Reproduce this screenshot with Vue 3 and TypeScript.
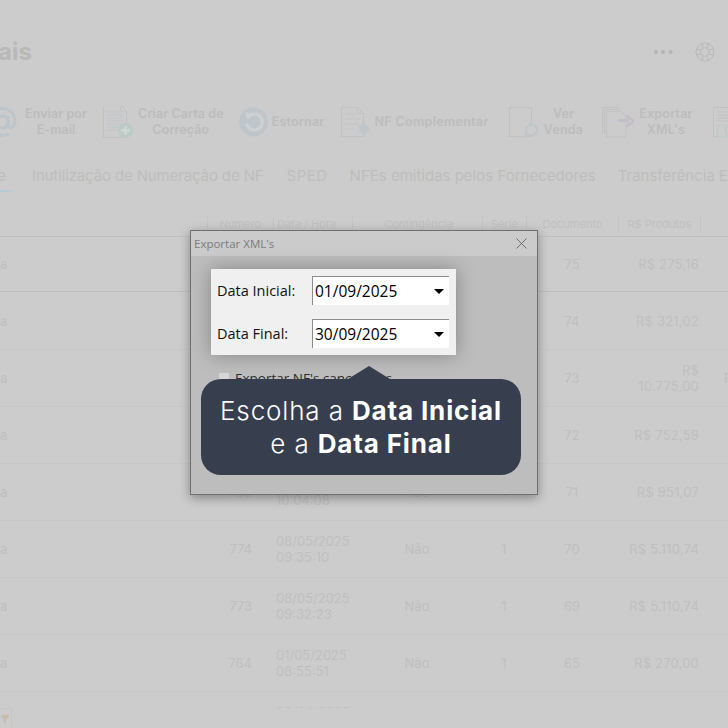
<script setup lang="ts">
interface Row {
  left: string
  num: string
  date: string
  time: string
  cont: string
  serie: string
  doc: string
  value: string
  extra: string
}
const rows: Row[] = [
  { left: 'a', num: '781', date: '02/06/2025', time: '11:12:40', cont: 'Não', serie: '1', doc: '75', value: 'R$ 275,16', extra: '' },
  { left: 'a', num: '780', date: '28/05/2025', time: '15:20:11', cont: 'Não', serie: '1', doc: '74', value: 'R$ 321,02', extra: '' },
  { left: 'a', num: '779', date: '22/05/2025', time: '09:41:52', cont: 'Não', serie: '1', doc: '73', value: 'R$ 10.775,00', extra: 'F' },
  { left: 'a', num: '778', date: '15/05/2025', time: '14:03:27', cont: 'Não', serie: '1', doc: '72', value: 'R$ 752,59', extra: '' },
  { left: 'a', num: '766', date: '09/05/2025', time: '10:04:08', cont: 'Não', serie: '1', doc: '71', value: 'R$ 951,07', extra: '' },
  { left: 'a', num: '774', date: '08/05/2025', time: '09:35:10', cont: 'Não', serie: '1', doc: '70', value: 'R$ 5.110,74', extra: '' },
  { left: 'a', num: '773', date: '08/05/2025', time: '09:32:23', cont: 'Não', serie: '1', doc: '69', value: 'R$ 5.110,74', extra: '' },
  { left: 'a', num: '764', date: '01/05/2025', time: '08:55:51', cont: 'Não', serie: '1', doc: '65', value: 'R$ 270,00', extra: '' },
  { left: 'a', num: '760', date: '30/04/2025', time: '16:21:09', cont: 'Não', serie: '1', doc: '64', value: 'R$ 180,00', extra: '' },
]
const headers = ['', 'Número', 'Data / Hora', 'Contingência', 'Série', 'Documento', 'R$ Produtos', '']
const tabs = ['Nota Fiscal Eletrônica de Saída e', 'Inutilização de Numeração de NF', 'SPED', 'NFEs emitidas pelos Fornecedores', 'Transferência Entre Lojas']
const dates = [
  { label: 'Data Inicial:', value: '01/09/2025' },
  { label: 'Data Final:', value: '30/09/2025' },
]
</script>

<template>
  <div class="page">
    <header class="top">
      <div class="title"><span>Notas Fiscais</span></div>
      <div class="top-actions">
        <svg class="dots" width="20" height="6" viewBox="0 0 20 6">
          <circle cx="3" cy="3" r="2" />
          <circle cx="10" cy="3" r="2" />
          <circle cx="17.5" cy="3" r="2" />
        </svg>
        <svg class="buoy" width="20" height="20" viewBox="0 0 20 20">
          <circle cx="10" cy="10" r="9" />
          <circle cx="10" cy="10" r="4.2" />
          <path d="M7 1.6 8 6M13 1.6 12 6M7 18.4 8 14M13 18.4 12 14M1.6 7 6 8M1.6 13 6 12M18.4 7 14 8M18.4 13 14 12" />
        </svg>
      </div>
    </header>

    <nav class="toolbar">
      <div class="tool t-mail">
        <svg width="30" height="30" viewBox="0 0 30 30">
          <circle cx="15" cy="15" r="6" fill="none" stroke="#bec5ca" stroke-width="3" />
          <path d="M21 9v8.5c0 4.5 7 4 7-3C28 6.500 22 1.500 15 1.500S1.500 7.500 1.500 15 7.500 28.500 15 28.500c3 0 5-.6 7-1.800" fill="none" stroke="#bec5ca" stroke-width="3" />
        </svg>
        <span class="label">Enviar por<br />E-mail</span>
      </div>
      <div class="tool t-carta">
        <svg width="30" height="32" viewBox="0 0 30 32">
          <path d="M.5.500h17l6 6v27H.5z" transform="translate(0 -2)" fill="none" stroke="#c1c1c1" />
          <path d="M17.500 0v5h6" fill="none" stroke="#c1c1c1" />
          <path d="M4 6h12M4 9h16M4 12h16M4 15h16M4 18h16M4 21h14M4 24h12" stroke="#c1c4c9" stroke-width="1.200" />
          <circle cx="22.500" cy="24.500" r="7.500" fill="#bacac4" />
          <path d="M22.500 20v9M18 24.500h9" stroke="#d2d6d3" stroke-width="2.400" />
        </svg>
        <span class="label">Criar Carta de<br />Correção</span>
      </div>
      <div class="tool t-estornar">
        <svg width="29" height="30" viewBox="0 0 29 30">
          <circle cx="14.500" cy="15" r="14.500" fill="#bec6cc" />
          <path d="M9.500 9.500a8 8 0 1 1-2 7" fill="none" stroke="#cfd2d4" stroke-width="3" />
          <path d="M6.500 5.500 13 7 8.500 13z" fill="#cfd2d4" />
          <circle cx="14.500" cy="15" r="3.500" fill="#bfc6cc" />
        </svg>
        <span class="label">Estornar</span>
      </div>
      <div class="tool t-nf">
        <svg width="32" height="32" viewBox="0 0 32 32">
          <path d="M.5 1.500h16l6 6v23H.5z" fill="none" stroke="#c1c1c1" />
          <path d="M16.500 1.500v6h6" fill="none" stroke="#c1c1c1" />
          <path d="M4 8h10M4 13h15M4 18h13M4 23h9" stroke="#c1c1c1" stroke-width="1.200" />
          <path d="M22 16l8 8-5 3-2 3-3-5-4 3 3-5-3-3 4-1z" fill="#bec6cc" />
        </svg>
        <span class="label">NF Complementar</span>
      </div>
      <div class="tool t-venda">
        <svg width="30" height="31" viewBox="0 0 30 31">
          <rect x=".5" y=".5" width="22" height="29" fill="none" stroke="#c1c1c1" />
          <circle cx="22.500" cy="23" r="5.500" fill="#cccccc" stroke="#bec5ca" stroke-width="2" />
          <path d="M18 27.500 14.500 31" stroke="#bec5ca" stroke-width="2.500" />
        </svg>
        <span class="label">Ver<br />Venda</span>
      </div>
      <div class="tool t-xml">
        <svg width="32" height="31" viewBox="0 0 32 31">
          <path d="M.5 26V.5H17M2.500 27V2.500H19" fill="none" stroke="#c1c1c1" />
          <path d="M4.500 30V4.500H19l5 5V30z" fill="#cccccc" stroke="#c1c1c1" />
          <path d="M16 13.500h11" stroke="#c3bcc9" stroke-width="3" />
          <path d="M24 8.500 32 14l-8 5.500" fill="none" stroke="#c3bcc9" stroke-width="2.500" />
        </svg>
        <span class="label">Exportar<br />XML's</span>
      </div>
      <div class="tool t-last">
        <svg width="30" height="31" viewBox="0 0 30 31">
          <rect x=".5" y=".5" width="24" height="29" fill="none" stroke="#c1c1c1" />
          <path d="M4 5h18M4 8h18M4 11h18M4 14h18" stroke="#c1c1c1" />
          <rect x="5" y="18" width="25" height="12" fill="#cccccc" stroke="#bbc7c1" />
          <circle cx="16" cy="24" r="4" fill="none" stroke="#bbc7c1" />
        </svg>
      </div>
    </nav>

    <div class="tabs">
      <div v-for="(tab, i) in tabs" :key="tab" class="tab" :class="{ active: i === 0 }"><span>{{ tab }}</span></div>
    </div>

    <div class="thead">
      <div v-for="(h, i) in headers" :key="i" class="th">{{ h }}</div>
    </div>

    <div class="tbody">
      <div v-for="r in rows" :key="r.doc + r.num" class="tr">
        <div class="td left">{{ r.left }}</div>
        <div class="td num">{{ r.num }}</div>
        <div class="td date">{{ r.date }}<br />{{ r.time }}</div>
        <div class="td center">{{ r.cont }}</div>
        <div class="td center">{{ r.serie }}</div>
        <div class="td center">{{ r.doc }}</div>
        <div class="td value">{{ r.value }}</div>
        <div class="td extra">{{ r.extra }}</div>
      </div>
    </div>

    <footer class="foot">
      <div class="filter">
        <svg width="8" height="8" viewBox="0 0 8 8"><path d="M0 0h8v2L5 4.500V8H3V4.500L0 2z" fill="#c6bdae" /></svg>
      </div>
    </footer>

    <section class="dialog">
      <div class="dlg-title">
        <span>Exportar XML's</span>
        <svg width="11" height="11" viewBox="0 0 11 11"><path d="M.5.500l10 10M10.500.500l-10 10" stroke="#6e6e6e" fill="none" /></svg>
      </div>
      <div class="dlg-body">
        <div class="spot">
          <div v-for="d in dates" :key="d.label" class="field">
            <label>{{ d.label }}</label>
            <div class="combo">
              <span>{{ d.value }}</span>
              <i class="caret"></i>
            </div>
          </div>
        </div>
        <div class="check">
          <i class="box"></i>
          <span>Exportar NF's canceladas</span>
        </div>
      </div>
    </section>

    <div class="callout">
      <i class="arrow"></i>
      <p>Escolha a <b>Data Inicial</b><br />e a <b>Data Final</b></p>
    </div>
  </div>
</template>

<style>
html, body { margin: 0; background: #cccccc; }
</style>

<style scoped>
.page {
  position: relative;
  width: 728px;
  height: 728px;
  overflow: hidden;
  display: flex;
  flex-direction: column;
  background: #cccccc;
  color: #bfbfbf;
  font-family: Inter, "Liberation Sans", sans-serif;
}

.top {
  flex: none;
  height: 104px;
  box-sizing: border-box;
  padding: 36px 13px 0 0;
  display: flex;
  justify-content: space-between;
  align-items: flex-start;
}
.title {
  width: 32px;
  height: 32px;
  display: flex;
  justify-content: flex-end;
  white-space: nowrap;
  font-size: 24px;
  line-height: 32px;
  font-weight: 700;
  color: #b8b8b8;
}
.top-actions {
  display: flex;
  align-items: center;
  gap: 22px;
  height: 32px;
}
.dots { fill: #b5b5b5; }
.buoy { fill: none; stroke: #b8b8b8; stroke-width: 1; }

.toolbar {
  flex: none;
  height: 36px;
  display: flex;
  align-items: center;
  margin-left: -13px;
  width: 800px;
  gap: 16px;
}
.tool {
  flex: none;
  display: flex;
  align-items: center;
  gap: 5px;
}
.tool svg { flex: none; display: block; }
.label {
  font-size: 12.500px;
  line-height: 16px;
  font-weight: 600;
  text-align: center;
  white-space: nowrap;
  color: #bcbcbc;
  letter-spacing: .2px;
}
.t-mail { gap: 8px; }
.t-mail .label, .t-carta .label { letter-spacing: .08px; }
.t-carta { gap: 5px; }
.t-estornar { gap: 4px; margin-left: -1px; }
.t-nf { gap: 1px; margin-left: 1px; }
.t-nf .label { letter-spacing: .33px; }
.t-venda { margin-left: 4px; }
.t-xml { margin-left: 3px; gap: 5px; }
.t-last { margin-left: 4px; }

.tabs {
  flex: none;
  margin-top: 26px;
  height: 26px;
  display: flex;
  gap: 22px;
  justify-content: flex-start;
  white-space: nowrap;
  font-size: 15px;
  line-height: 20px;
  color: #bfbdbb;
}
.tab { height: 26px; box-sizing: border-box; flex: none; }
.tab.active {
  width: 12px;
  padding-right: 6px;
  border-bottom: 2px solid #b8cad4;
  display: flex;
  justify-content: flex-end;
}
.tab.active + .tab { margin-left: -2px; margin-right: 1px; letter-spacing: -.13px; }
.tab:nth-child(3) { letter-spacing: .5px; }
.tab.active span { flex: none; }

.thead, .tr {
  display: grid;
  grid-template-columns: 207px 66px 79px 130px 44px 92px 82px 28px;
}
.thead {
  flex: none;
  margin-top: 23px;
  padding-bottom: 3px;
  border-bottom: 1px solid #bebebe;
  height: 18px;
}
.th {
  font-size: 11px;
  line-height: 18px;
  text-align: center;
  color: #c0c0c0;
  border-left: 1px solid #c4c4c4;
  white-space: nowrap;
}
.th:first-child { border-left: none; }
.th:nth-child(3) { text-align: left; padding-left: 3px; }
.th:nth-child(4) { padding-left: 2px; }

.tbody {
  flex: 1;
  min-height: 0;
  overflow: hidden;
}
.tr {
  height: 57px;
  box-sizing: border-box;
  border-bottom: 1px solid #c8c8c8;
  font-size: 13px;
  line-height: 16px;
  color: #bfbfbf;
  align-items: center;
}
.tr:first-child { height: 55px; border-bottom-color: #bcbcbc; }
.tr:nth-child(2) { height: 58px; }
.td { min-width: 0; }
.left { display: flex; justify-content: flex-start; }
.num { text-align: right; padding-right: 21px; }
.date { padding-left: 3px; white-space: nowrap; }
.center { text-align: center; }
.value { text-align: right; padding-right: 1px; padding-left: 8px; letter-spacing: .2px; }
.extra { padding-left: 24px; }

.foot {
  flex: none;
  height: 20px;
  display: flex;
}
.filter {
  width: 12px;
  border-right: 1px solid #c6c6c6;
  border-top: 1px solid #c6c6c6;
  display: flex;
  justify-content: center;
  align-items: center;
  padding-right: 2px;
  box-sizing: border-box;
}

.dialog {
  position: absolute;
  left: 190px;
  top: 230px;
  width: 348px;
  height: 265px;
  box-sizing: border-box;
  border: 1px solid #707070;
  background: #bdbdbd;
  box-shadow: 0 3px 10px rgba(0, 0, 0, .35);
  display: flex;
  flex-direction: column;
  font-family: "Open Sans", "Noto Sans", sans-serif;
}
.dlg-title {
  flex: none;
  height: 25px;
  background: #cbcbcb;
  display: flex;
  justify-content: space-between;
  align-items: center;
  padding: 0 10px 0 3px;
  font-size: 11.500px;
  color: #7b7b7b;
}
.dlg-body {
  flex: 1;
  padding: 13px 0 0 20px;
}
.spot {
  width: 245px;
  height: 86px;
  box-sizing: border-box;
  padding: 7px 7px 7px 6px;
  background: #f0f0f0;
  box-shadow: 0 0 18px rgba(0, 0, 0, .3);
  display: flex;
  flex-direction: column;
  gap: 14px;
}
.field {
  display: flex;
  align-items: center;
  justify-content: space-between;
  height: 29px;
}
.field label {
  font-size: 14.500px;
  color: #111;
}
.combo {
  width: 137px;
  height: 29px;
  box-sizing: border-box;
  background: #fff;
  border-top: 1px solid #8c8c8c;
  border-left: 1px solid #8c8c8c;
  display: flex;
  align-items: center;
  justify-content: space-between;
  padding: 0 5px 0 2px;
  font-size: 15.500px;
  color: #000;
}
.caret {
  width: 0;
  height: 0;
  border-left: 5px solid transparent;
  border-right: 5px solid transparent;
  border-top: 5px solid #000;
}
.check {
  margin-top: 14px;
  margin-left: 8px;
  display: flex;
  align-items: center;
  gap: 6px;
  font-size: 13.500px;
  color: #2b2b2b;
}
.box {
  width: 10px;
  height: 10px;
  background: #d6d6d6;
}

.callout {
  position: absolute;
  left: 201px;
  top: 379px;
  width: 320px;
  height: 96px;
  box-sizing: border-box;
  background: #373f4e;
  border-radius: 20px;
  display: flex;
  align-items: center;
  justify-content: center;
  color: #fff;
}
.arrow {
  position: absolute;
  left: 147px;
  top: -13px;
  width: 0;
  height: 0;
  border-left: 21px solid transparent;
  border-right: 21px solid transparent;
  border-bottom: 13px solid #373f4e;
}
.callout p {
  margin: 0;
  font-size: 26px;
  line-height: 33px;
  font-weight: 300;
  letter-spacing: .85px;
  text-align: center;
  white-space: nowrap;
}
.callout b { font-weight: 700; }
</style>
